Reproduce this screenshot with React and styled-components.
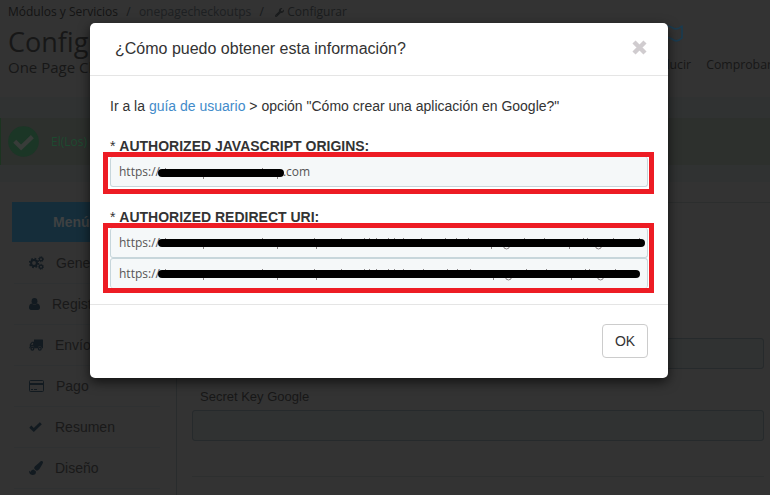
import React from 'react';
import styled, { createGlobalStyle } from 'styled-components';
import { FaPaintBrush, FaWrench } from 'react-icons/fa';

const sans = '"Liberation Sans", Arial, sans-serif';
const open = '"Open Sans", "Noto Sans", sans-serif';

const Global = createGlobalStyle`
  * { box-sizing: border-box; }
  body { margin: 0; overflow: hidden; font-family: ${sans}; }
`;
const Screen = styled.div`
  position: relative;
  width: 770px;
  height: 495px;
  overflow: hidden;
  background: #333;
  color: #171717;
`;
const Page = styled.div`height: 100%; display: flex; flex-direction: column;`;
const PageHeader = styled.header`
  height: 97px;
  padding: 4px 0 0 8px;
  display: flex;
  justify-content: space-between;
  font-family: ${open};
  flex: none;
`;
const Crumbs = styled.nav`
  display: flex;
  align-items: center;
  height: 16px;
  font-size: 12px;
  line-height: 16px;
  color: #141414;
`;
const Separator = styled.span`width: 21px; text-align: center; color: #171a1c;`;
const CrumbLink = styled.span`color: #1d2022;`;
const CurrentCrumb = styled.span`
  display: flex;
  align-items: center;
  gap: 3px;
  margin-left: 3px;
  color: #1a1c1d;
`;
const Title = styled.h1`margin: 4px 0 0; font-size: 27px; line-height: 36px; font-weight: 400; white-space: nowrap;`;
const Subtitle = styled.p`margin: 0; font-size: 15px; line-height: 14px; white-space: nowrap;`;
const Tools = styled.div`display: flex; gap: 15px; font-size: 12.3px; line-height: 18px; margin-right: -2px;`;
const Tool = styled.div`
  display: flex;
  flex-direction: column;
  align-items: center;
  justify-content: flex-end;
  gap: 14px;
  height: 70px;
`;
const Notice = styled.section`
  height: 85px;
  padding: 21px 0 17px;
  background: #303232;
  flex: none;
`;
const Success = styled.div`
  display: flex;
  align-items: center;
  gap: 12px;
  height: 47px;
  padding-left: 7px;
  border-left: 1px solid #1c3420;
  background: #2d302d;
  color: #1d4a30;
  font: 12px ${open};
`;
const Content = styled.div`display: grid; grid-template-columns: 177px 1fr; flex: 1; padding-top: 20px;`;
const Menu = styled.aside`padding-left: 12px; border-right: 1px solid #292c2d;`;
const MenuHeading = styled.div`
  height: 40px;
  margin-bottom: 1px;
  padding-left: 41px;
  background: #152d3a;
  color: #3f4142;
  font: bold 14px/41px ${sans};
`;
const MenuItem = styled.div`
  display: flex;
  align-items: center;
  height: 41px;
  margin: 0 16px 0 2px;
  padding-left: 15px;
  border-bottom: 1px solid #2f3132;
  font-size: 14px;
  gap: ${p => p.$gap}px;
  color: #191919;
  svg { color: #121a20; flex: none; }
`;
const Form = styled.main`border-top: 1px solid #2c2e2e; padding: 135px 6px 0 15px;`;
const PageField = styled.div`height: 31px; border: 1px solid #262a2c; border-radius: 3px; background: #303232;`;
const PageLabel = styled.label`display: block; height: 41px; padding: 19px 0 0 8px; font-size: 13px; line-height: 17px;`;
const Divider = styled.div`height: 1px; margin-top: 35px; background: #2d2f2f;`;

const Modal = styled.section`
  position: absolute;
  left: 90px;
  top: 23px;
  width: 578px;
  height: 355px;
  border-radius: 5px;
  background: #fff;
  color: #333;
  box-shadow: 0 4px 12px rgba(0, 0, 0, 0.65);
  display: flex;
  flex-direction: column;
`;
const ModalHeader = styled.header`
  display: flex;
  align-items: center;
  justify-content: space-between;
  height: 53px;
  padding: 0 21px 2px 25px;
  border-bottom: 1px solid #e5e5e5;
  flex: none;
`;
const ModalTitle = styled.h2`margin: 1px 0 0; font-size: 16px; font-weight: 400; line-height: 20px;`;
const Close = styled.button`border: 0; background: none; padding: 0; color: #d0cccf; display: flex; margin-top: -2px;`;
const ModalBody = styled.div`height: 228px; padding: 21px 14px 0 13px; flex: none;`;
const Intro = styled.p`margin: 0 0 24px 7px; font-size: 14px; line-height: 18px;`;
const GuideLink = styled.a`color: #428bca;`;
const FieldLabel = styled.div`height: 13px; margin-left: 7px; font-size: 14px; line-height: 14px; white-space: pre; b { font-weight: 700; }`;
const Highlight = styled.div`
  height: ${p => p.$height}px;
  margin-bottom: ${p => p.$after || 0}px;
  padding: 0 1px 0 2px;
  border: 5px solid #ed1c24;
  overflow: hidden;
`;
const UrlField = styled.div`
  display: flex;
  align-items: center;
  height: ${p => p.$height}px;
  padding: 0 0 ${p => p.$lift || 0}px 8px;
  border: 1px solid #c7d6db;
  border-top-width: ${p => (p.$topOpen ? 0 : 1)}px;
  border-bottom-width: ${p => (p.$bottomOpen ? 0 : 1)}px;
  border-radius: 3px;
  background: #f5f8f9;
  color: #555;
  font: 12px/17px ${open};
`;
const MaskDrawing = styled.svg`margin-left: ${p => p.$shift}px; margin-right: -2px; flex: none; display: block;`;
const ModalFooter = styled.footer`
  border-top: 1px solid #e5e5e5;
  flex: 1;
  display: flex;
  justify-content: flex-end;
  align-items: flex-start;
  padding: 19px 20px 0;
`;
const OkButton = styled.button`
  width: 46px;
  height: 34px;
  padding: 0;
  border: 1px solid #ccc;
  border-radius: 4px;
  background: #fff;
  color: #333;
  font: 14px ${sans};
`;

const Mask = ({ width, up = [], down = [], hooks = [], shift = -2, y = 9 }) => (
  <MaskDrawing width={width} height="17" $shift={shift} fill="none">
    <g stroke="#8a8587">
      {up.map(x => <path key={`u${x}`} d={`M${x + 0.5} ${y - 5}v3`} />)}
      {down.map(x => <path key={`d${x}`} d={`M${x + 0.5} ${y + 3}v3`} />)}
      {hooks.map(x => <path key={`h${x}`} d={`M${x} ${y + 4}v1q2.5 2 5 0V${y + 4}`} />)}
    </g>
    <path d={`M4 ${y}H${width - 5}`} stroke="#000" strokeWidth="8" strokeLinecap="round" />
  </MaskDrawing>
);

const CogsIcon = () => (
  <svg width="15" height="14" viewBox="0 0 15 14" fill="none" stroke="currentColor">
    <circle cx="5" cy="7" r="2.9" strokeWidth="2" />
    <circle cx="5" cy="7" r="4.4" strokeWidth="1.6" strokeDasharray="1.7 1.756" />
    <circle cx="12" cy="3.2" r="1.6" strokeWidth="1.2" />
    <circle cx="12" cy="3.2" r="2.5" strokeWidth="1" strokeDasharray="1 .963" />
    <circle cx="12" cy="10.8" r="1.6" strokeWidth="1.2" />
    <circle cx="12" cy="10.8" r="2.5" strokeWidth="1" strokeDasharray="1 .963" />
  </svg>
);
const UserIcon = () => (
  <svg width="11" height="12" viewBox="0 0 11 12" fill="currentColor">
    <ellipse cx="5.5" cy="3.3" rx="2.9" ry="3.3" />
    <path d="M2.7 5.6C1 5.8 0 7.3 0 9.5C0 11 .8 12 2.2 12h6.6C10.2 12 11 11 11 9.5c0-2.2-1-3.7-2.7-3.9Q5.5 8.4 2.7 5.6z" />
  </svg>
);
const TruckIcon = () => (
  <svg width="14" height="12" viewBox="0 0 14 12" fill="currentColor">
    <path d="M5 .5h8.4q.6 0 .6.6v8.2h-1.2a2 2 0 0 0-4 0H5.4a2 2 0 0 0-4 0H.2V8.5l.6-.4V5.2L3 2.8h2z" />
    <path d="M1.8 5.7h2.3V3.8h-.6z" fill="#333" />
    <circle cx="3.4" cy="9.8" r="1.4" fill="none" stroke="currentColor" strokeWidth="1.2" />
    <circle cx="10.8" cy="9.8" r="1.4" fill="none" stroke="currentColor" strokeWidth="1.2" />
  </svg>
);
const CardIcon = () => (
  <svg width="15" height="12" viewBox="0 0 15 12" fill="none" stroke="currentColor">
    <rect x=".5" y=".5" width="14" height="11" rx="1" /><path d="M1 4h13" strokeWidth="2" /><path d="M2 9.5h2M5 9.5h3" />
  </svg>
);
const CheckIcon = () => (
  <svg width="13" height="10" viewBox="0 0 13 10" fill="none" stroke="currentColor" strokeWidth="2.9">
    <path d="M1.3 4.6l3.5 3.4L11.8 1.2" />
  </svg>
);
const BrushIcon = () => <FaPaintBrush size={14} />;
const SuccessIcon = () => (
  <svg width="31" height="31" viewBox="0 0 31 31" fill="none">
    <circle cx="15.5" cy="15.5" r="15.3" fill="#1b3626" />
    <path d="M6.7 15.3l6.4 6.3L24.4 10.6" stroke="#383c39" strokeWidth="4.3" />
  </svg>
);
const MapIcon = () => (
  <svg width="32" height="17" viewBox="0 0 32 17" fill="none" stroke="#1b3b4f" strokeWidth="1.7">
    <path d="M1 1v12q5 4 10 1q5-3 10 0q5 4 10-1V1q-5 5-10 1.5q-5-3-10 0Q6 6 1 1z" strokeLinejoin="round" />
  </svg>
);
const CloseIcon = () => (
  <svg width="15" height="15" viewBox="0 0 15 15" fill="none" stroke="currentColor" strokeWidth="4.4">
    <path d="M2 2l11 11M13 2L2 13" />
  </svg>
);

const items = [
  ['Generales', CogsIcon, 12],
  ['Registro', UserIcon, 12],
  ['Envío', TruckIcon, 12],
  ['Pago', CardIcon, 12],
  ['Resumen', CheckIcon, 13],
  ['Diseño', BrushIcon, 12],
];

const firstUp = [7, 104, 156, 183, 206, 211, 218, 230, 236, 245, 263, 287, 298, 310, 366, 386, 425, 429, 455, 481];
const secondUp = [7, 104, 156, 183, 206, 211, 218, 230, 236, 245, 265, 289, 299, 312, 368, 388, 427, 431, 457];

export default function App() {
  return (
    <Screen>
      <Global />
      <Page>
        <PageHeader>
          <div>
            <Crumbs>
              <span>Módulos y Servicios</span><Separator>/</Separator>
              <CrumbLink>onepagecheckoutps</CrumbLink><Separator>/</Separator>
              <CurrentCrumb><FaWrench size={9} />Configurar</CurrentCrumb>
            </Crumbs>
            <Title>Configurar</Title>
            <Subtitle>One Page Checkout PS</Subtitle>
          </div>
          <Tools><Tool><MapIcon />Traducir</Tool><Tool>Comprobar</Tool></Tools>
        </PageHeader>
        <Notice><Success><SuccessIcon />El(Los)</Success></Notice>
        <Content>
          <Menu>
            <MenuHeading>Menú</MenuHeading>
            {items.map(([name, Icon, gap]) => (
              <MenuItem key={name} $gap={gap}><Icon />{name}</MenuItem>
            ))}
          </Menu>
          <Form><PageField /><PageLabel>Secret Key Google</PageLabel><PageField /><Divider /></Form>
        </Content>
      </Page>
      <Modal>
        <ModalHeader>
          <ModalTitle>¿Cómo puedo obtener esta información?</ModalTitle>
          <Close aria-label="Cerrar"><CloseIcon /></Close>
        </ModalHeader>
        <ModalBody>
          <Intro>Ir a la <GuideLink>guía de usuario</GuideLink> &gt; opción "Cómo crear una aplicación en Google?"</Intro>
          <FieldLabel>* <b>AUTHORIZED JAVASCRIPT ORIGINS:</b></FieldLabel>
          <Highlight $height={42} $after={16}>
            <UrlField $height={30} $topOpen>https://<Mask width={127} up={[7, 104]} down={[45, 119]} y={10} />.com</UrlField>
          </Highlight>
          <FieldLabel>* <b>AUTHORIZED REDIRECT URI:</b></FieldLabel>
          <Highlight $height={70}>
            <UrlField $height={30} $lift={1} $topOpen>https://<Mask width={488} up={firstUp} down={[45, 119, 158, 333, 411]} hooks={[346, 438]} /></UrlField>
            <UrlField $height={30} $lift={1} $bottomOpen>https://<Mask width={483} up={secondUp} down={[45, 119, 158, 335, 413]} hooks={[348, 440]} /></UrlField>
          </Highlight>
        </ModalBody>
        <ModalFooter><OkButton>OK</OkButton></ModalFooter>
      </Modal>
    </Screen>
  );
}
